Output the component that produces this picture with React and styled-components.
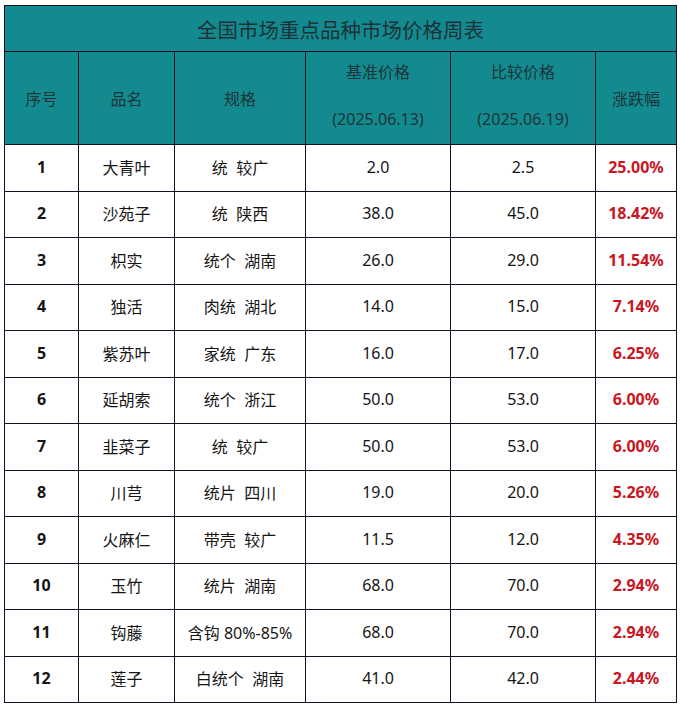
import React from "react";
import styled, { createGlobalStyle } from "styled-components";

const Global = createGlobalStyle`
  html, body { margin: 0; padding: 0; background: #fff; }
  body { font-family: "Noto Sans", "Noto Sans CJK SC", sans-serif; }
`;

const Page = styled.div`
  padding: 5px 0 0 4px;
`;

const Table = styled.table`
  border-collapse: collapse;
  table-layout: fixed;
  width: 672px;
  font-family: "Noto Sans", "Noto Sans CJK SC", sans-serif;
`;

const TitleCell = styled.th`
  background: #138a8f;
  color: #1b3338;
  font-weight: 400;
  font-size: 20.5px;
  height: 45px;
  padding: 0;
  border: 1px solid #0b1420;
  text-align: center;
  vertical-align: middle;
  font-family: "Noto Sans CJK SC", sans-serif;
`;

const HeadCell = styled.th`
  background: #138a8f;
  color: #1c3539;
  font-weight: 400;
  font-size: 16px;
  height: 92px;
  padding: 0;
  border: 1px solid #0b1420;
  text-align: center;
  vertical-align: middle;
`;

const HeadStack = styled.div`
  display: flex;
  flex-direction: column;
  align-items: center;
  gap: 24px;
  line-height: 23px;
  margin-top: -4px;
`;

const Row = styled.tr`
  height: 46.5px;
`;

const Cell = styled.td`
  border: 1px solid #0b1420;
  padding: 0 0 2px;
  text-align: center;
  vertical-align: middle;
  font-size: 16px;
  color: ${(p) => (p.$red ? "#c9161f" : "#151515")};
  font-weight: ${(p) => (p.$bold ? 700 : 400)};
  white-space: pre;
`;

const rows = [
  ["1", "大青叶", "统  较广", "2.0", "2.5", "25.00%"],
  ["2", "沙苑子", "统  陕西", "38.0", "45.0", "18.42%"],
  ["3", "枳实", "统个  湖南", "26.0", "29.0", "11.54%"],
  ["4", "独活", "肉统  湖北", "14.0", "15.0", "7.14%"],
  ["5", "紫苏叶", "家统  广东", "16.0", "17.0", "6.25%"],
  ["6", "延胡索", "统个  浙江", "50.0", "53.0", "6.00%"],
  ["7", "韭菜子", "统  较广", "50.0", "53.0", "6.00%"],
  ["8", "川芎", "统片  四川", "19.0", "20.0", "5.26%"],
  ["9", "火麻仁", "带壳  较广", "11.5", "12.0", "4.35%"],
  ["10", "玉竹", "统片  湖南", "68.0", "70.0", "2.94%"],
  ["11", "钩藤", "含钩 80%-85%", "68.0", "70.0", "2.94%"],
  ["12", "莲子", "白统个  湖南", "41.0", "42.0", "2.44%"],
];

const widths = [74, 96, 131, 145, 145, 81];

export default function App() {
  return (
    <Page>
      <Global />
      <Table>
        <colgroup>
          {widths.map((w, i) => (
            <col key={i} style={{ width: w }} />
          ))}
        </colgroup>
        <thead>
          <tr>
            <TitleCell colSpan={6}>全国市场重点品种市场价格周表</TitleCell>
          </tr>
          <tr>
            <HeadCell>序号</HeadCell>
            <HeadCell>品名</HeadCell>
            <HeadCell>规格</HeadCell>
            <HeadCell>
              <HeadStack>
                <span>基准价格</span>
                <span>(2025.06.13)</span>
              </HeadStack>
            </HeadCell>
            <HeadCell>
              <HeadStack>
                <span>比较价格</span>
                <span>(2025.06.19)</span>
              </HeadStack>
            </HeadCell>
            <HeadCell>涨跌幅</HeadCell>
          </tr>
        </thead>
        <tbody>
          {rows.map((r) => (
            <Row key={r[0]}>
              <Cell $bold>{r[0]}</Cell>
              <Cell>{r[1]}</Cell>
              <Cell>{r[2]}</Cell>
              <Cell>{r[3]}</Cell>
              <Cell>{r[4]}</Cell>
              <Cell $bold $red>{r[5]}</Cell>
            </Row>
          ))}
        </tbody>
      </Table>
    </Page>
  );
}
